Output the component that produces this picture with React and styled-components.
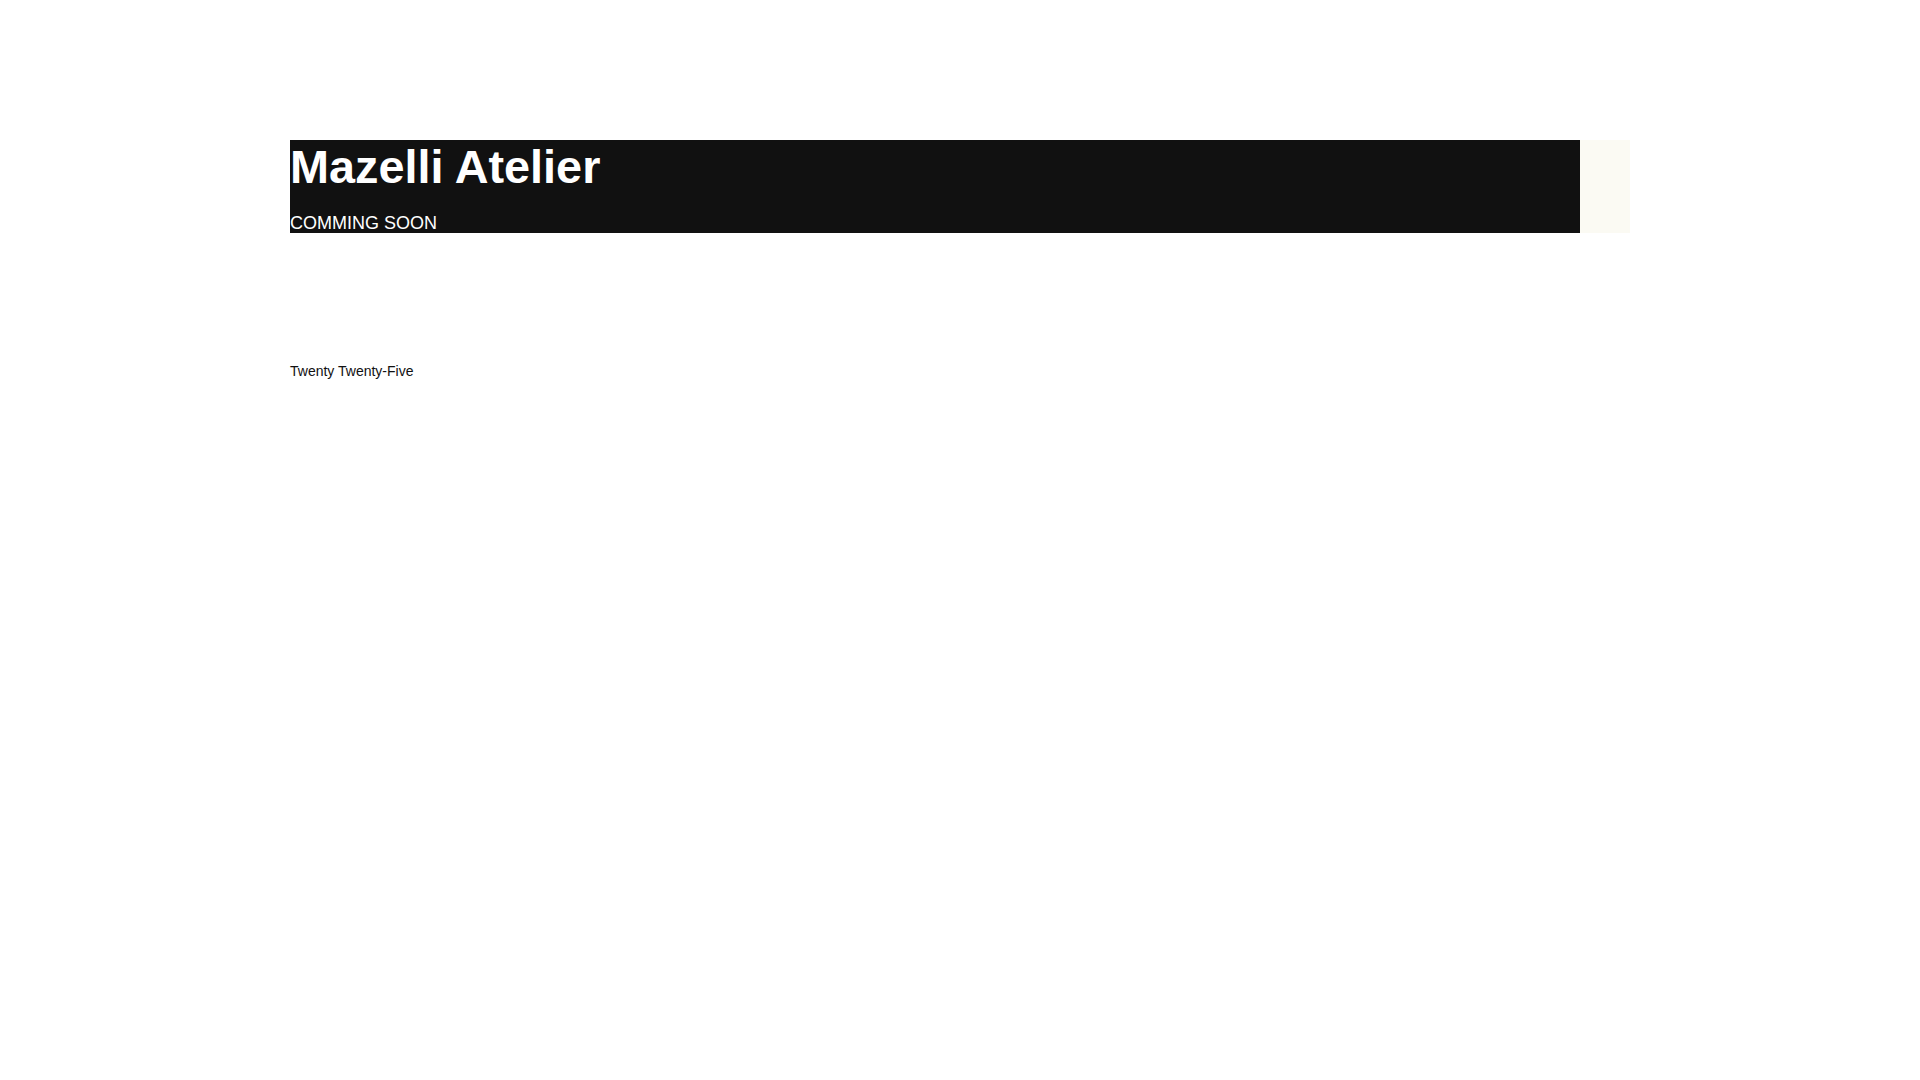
import React from 'react';
import styled, { createGlobalStyle } from 'styled-components';

const GlobalStyle = createGlobalStyle`
body {
  margin: 0;
  background: #ffffff;
  font-family: "Liberation Sans", Arial, sans-serif;
}
`;

const Page = styled.div`
width: 1340px;
margin: 140px auto 0;
`;

const Header = styled.header`
display: flex;
align-items: stretch;
`;

const Brand = styled.div`
flex: 1;
height: 93px;
background-color: #111111;
color: #ffffff;
`;

const Side = styled.div`
width: 50px;
background-color: #fbfaf3;
`;

const Title = styled.h1`
margin: 0;
font-size: 46.8px;
font-weight: 700;
line-height: 54px;
`;

const Tagline = styled.p`
margin: 19px 0 0;
font-size: 18px;
line-height: 20px;
`;

const Footer = styled.footer`
margin-top: 130px;
font-size: 14px;
line-height: normal;
color: #111111;
`;

const App = () => {
  return (
    <>
      <GlobalStyle />
      <Page>
        <Header>
          <Brand>
            <Title>Mazelli Atelier</Title>
            <Tagline>COMMING SOON</Tagline>
          </Brand>
          <Side />
        </Header>
        <Footer>Twenty Twenty-Five</Footer>
      </Page>
    </>
  );
};

export default App;
